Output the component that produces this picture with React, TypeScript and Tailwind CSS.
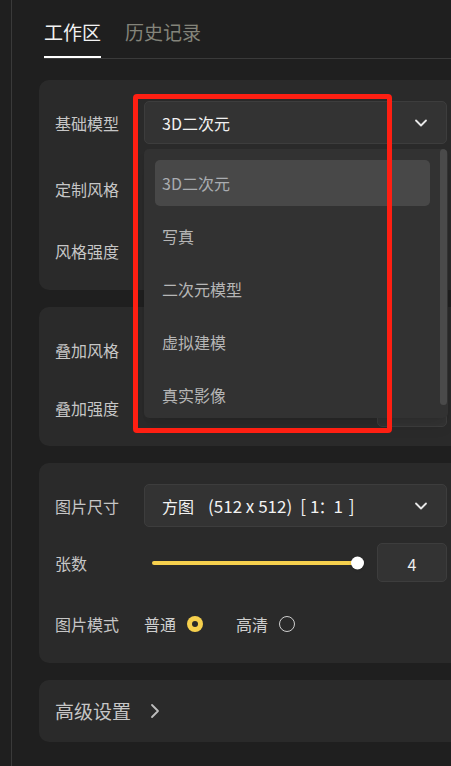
import { ChevronDown, ChevronRight } from 'lucide-react'

const font = { fontFamily: '"Noto Sans CJK SC", "Noto Sans", sans-serif' }

const models = ['3D二次元', '写真', '二次元模型', '虚拟建模', '真实影像']

function Select({ children }: { children: React.ReactNode }) {
  return (
    <div className="flex h-[43px] flex-1 items-center justify-between rounded-[5px] border border-[#3d3d3d] bg-[#333333] pl-[17px] pr-[15px]">
      <div className="flex items-center text-[16px] text-[#f2f2f2] whitespace-pre">{children}</div>
      <ChevronDown className="h-[20px] w-[20px] text-[#e8e8e8]" strokeWidth={2.2} />
    </div>
  )
}

function NumberBox({ value }: { value: string }) {
  return (
    <div className="flex h-[39px] w-[70px] items-center justify-center rounded-[5px] border border-[#3d3d3d] bg-[#333333] text-[16px] text-[#eeeeee]">
      <span className="pt-[2px]">{value}</span>
    </div>
  )
}

function Row({ label, className, children }: { label: string; className?: string; children?: React.ReactNode }) {
  return (
    <div className={'flex items-center ' + (className ?? '')}>
      <div className="w-[89px] shrink-0 text-[16px] text-[#c6c6c6]">{label}</div>
      <div className="flex flex-1 items-center">{children}</div>
    </div>
  )
}

function Slider() {
  return (
    <div className="relative mr-[12px] flex h-[39px] flex-1 items-center pl-[8px] pr-[7px]">
      <div className="h-[4px] flex-1 rounded-full bg-[#f6d04d]" />
      <div className="absolute right-[1px] top-1/2 h-[13px] w-[13px] -translate-y-1/2 rounded-full bg-white shadow" />
    </div>
  )
}

export default function App() {
  return (
    <div style={font} className="relative flex h-[766px] w-[451px] overflow-hidden bg-[#1f1f1f]">
      <div className="w-[11px] shrink-0" />
      <div className="w-px shrink-0 bg-[#3a3a3a]" />

      <div className="w-[451px] shrink-0 pl-[27px]">
        {/* Tabs */}
        <div className="ml-[5px] flex gap-[24px] border-b border-[#3a3a3a]">
          <div className="flex flex-col">
            <span className="pt-[19px] text-[19px] leading-[26px] text-[#f2f2f2]">工作区</span>
            <div className="mt-[11px] h-[2px] bg-white" />
          </div>
          <span className="pt-[19px] text-[19px] leading-[26px] text-[#84847a]">历史记录</span>
        </div>

        <div className="mt-[21px] flex w-[424px] flex-col gap-[17px]">
          {/* Model card */}
          <div className="relative rounded-[10px] bg-[#2a2a2a] pl-[16px] pr-[16px] pt-[21px] pb-[20px]">
            <Row label="基础模型">
              <Select>3D二次元</Select>
            </Row>
            <Row label="定制风格" className="mt-[23px]">
              <div className="h-[43px] flex-1" />
            </Row>
            <Row label="风格强度" className="mt-[21px]">
              <div className="h-[39px] flex-1" />
            </Row>

            {/* Open dropdown */}
            <div className="absolute left-[105px] top-[69px] z-10 flex h-[269px] w-[304px] overflow-hidden rounded-[5px] bg-[#323232] shadow-lg">
              <div className="flex flex-1 flex-col pl-[11px] pt-[11px]">
                {models.map((m, i) => (
                  <div
                    key={m}
                    className={
                      'mb-[7px] flex h-[46px] w-[275px] shrink-0 items-center rounded-[5px] pl-[7px] text-[16px] ' +
                      (i === 0 ? 'bg-[#484848] text-[#a9acb0]' : 'text-[#b6b6b6]')
                    }
                  >
                    {m}
                  </div>
                ))}
              </div>
              <div className="mr-[1px] mb-[13px] w-[7px] rounded-full bg-[#4a4a4a]" />
            </div>
          </div>

          {/* Overlay card */}
          <div className="rounded-[10px] bg-[#2a2a2a] pl-[16px] pr-[16px] pt-[21px] pb-[19px]">
            <Row label="叠加风格">
              <div className="h-[43px] flex-1" />
            </Row>
            <Row label="叠加强度" className="mt-[17px]">
              <div className="flex-1" />
              <NumberBox value="" />
            </Row>
          </div>

          {/* Image card */}
          <div className="rounded-[10px] bg-[#2a2a2a] pl-[16px] pr-[16px] pt-[21px] pb-[27px]">
            <Row label="图片尺寸">
              <Select>
                <span>方图</span>
                <span className="ml-[14px] text-[17px]">(512 x 512)</span>
                <span className="ml-[8px] text-[17px]">[</span>
                <span className="ml-[4px] text-[17px]">1</span>
                <span className="inline-flex w-[14px] justify-center overflow-hidden">：</span>
                <span className="text-[17px]">1</span>
                <span className="ml-[6px] text-[17px]">]</span>
              </Select>
            </Row>
            <Row label="张数" className="mt-[16px]">
              <Slider />
              <NumberBox value="4" />
            </Row>
            <Row label="图片模式" className="mt-[30px] h-[24px]">
              <span className="text-[16px] text-[#cfcfcf]">普通</span>
              <span className="ml-[11px] flex h-[16px] w-[16px] items-center justify-center rounded-full bg-[#f6d04d]">
                <span className="h-[6px] w-[6px] rounded-full bg-[#2a2a2a]" />
              </span>
              <span className="ml-[33px] text-[16px] text-[#cfcfcf]">高清</span>
              <span className="ml-[11px] h-[16px] w-[16px] rounded-full border-[1.5px] border-[#cfcfcf]" />
            </Row>
          </div>

          {/* Advanced */}
          <div className="flex h-[62px] items-center rounded-[10px] bg-[#2a2a2a] pl-[16px]">
            <span className="text-[19px] text-[#c6c6c6]">高级设置</span>
            <ChevronRight className="ml-[12px] h-[24px] w-[24px] text-[#bdbdbd]" strokeWidth={1.8} />
          </div>
        </div>
      </div>

      {/* Red annotation box */}
      <div className="pointer-events-none absolute left-[133px] top-[94px] z-20 h-[339px] w-[259px] rounded-[4px] border-[5px] border-[#fe1f12]" />
    </div>
  )
}
